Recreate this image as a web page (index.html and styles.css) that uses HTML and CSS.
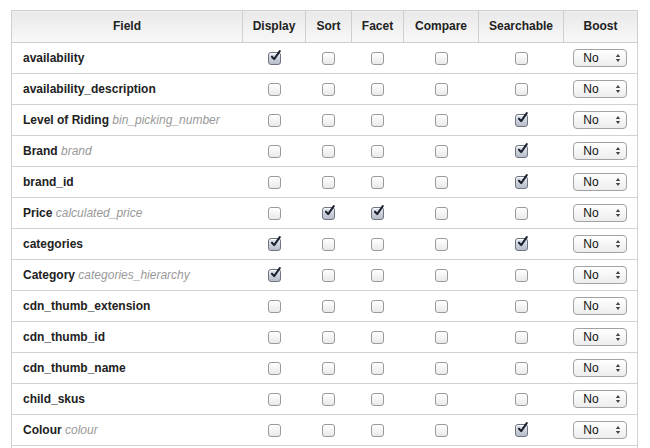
FILE: index.html
```html
<!DOCTYPE html>
<html>
<head>
<meta charset="utf-8">
<link rel="stylesheet" href="styles.css">
</head>
<body>
<svg class="defs" width="0" height="0">
  <symbol id="tick" viewBox="0 0 14 14">
    <path d="M3.2 7.2 L5.6 9.8 L11.6 1.2" fill="none" stroke="#1c2230" stroke-width="2.2" stroke-linecap="round" stroke-linejoin="round"/>
  </symbol>
  <symbol id="updown" viewBox="0 0 6 10">
    <path d="M3 1 L5.2 4 L0.8 4 Z M3 9 L5.2 6 L0.8 6 Z" fill="#444"/>
  </symbol>
</svg>
<div class="wrap">
<table class="fields">
  <colgroup>
    <col class="c-field"><col class="c-display"><col class="c-sort"><col class="c-facet"><col class="c-compare"><col class="c-search"><col class="c-boost">
  </colgroup>
  <thead>
    <tr><th>Field</th><th>Display</th><th>Sort</th><th>Facet</th><th>Compare</th><th>Searchable</th><th>Boost</th></tr>
  </thead>
  <tbody>
    <tr><td class="name">availability</td><td><span class="cb on"><svg><use href="#tick"/></svg></span></td><td><span class="cb"></span></td><td><span class="cb"></span></td><td><span class="cb"></span></td><td><span class="cb"></span></td><td><span class="sel">No<svg><use href="#updown"/></svg></span></td></tr>
    <tr><td class="name">availability_description</td><td><span class="cb"></span></td><td><span class="cb"></span></td><td><span class="cb"></span></td><td><span class="cb"></span></td><td><span class="cb"></span></td><td><span class="sel">No<svg><use href="#updown"/></svg></span></td></tr>
    <tr><td class="name">Level of Riding <em>bin_picking_number</em></td><td><span class="cb"></span></td><td><span class="cb"></span></td><td><span class="cb"></span></td><td><span class="cb"></span></td><td><span class="cb on"><svg><use href="#tick"/></svg></span></td><td><span class="sel">No<svg><use href="#updown"/></svg></span></td></tr>
    <tr><td class="name">Brand <em>brand</em></td><td><span class="cb"></span></td><td><span class="cb"></span></td><td><span class="cb"></span></td><td><span class="cb"></span></td><td><span class="cb on"><svg><use href="#tick"/></svg></span></td><td><span class="sel">No<svg><use href="#updown"/></svg></span></td></tr>
    <tr><td class="name">brand_id</td><td><span class="cb"></span></td><td><span class="cb"></span></td><td><span class="cb"></span></td><td><span class="cb"></span></td><td><span class="cb on"><svg><use href="#tick"/></svg></span></td><td><span class="sel">No<svg><use href="#updown"/></svg></span></td></tr>
    <tr><td class="name">Price <em>calculated_price</em></td><td><span class="cb"></span></td><td><span class="cb on"><svg><use href="#tick"/></svg></span></td><td><span class="cb on"><svg><use href="#tick"/></svg></span></td><td><span class="cb"></span></td><td><span class="cb"></span></td><td><span class="sel">No<svg><use href="#updown"/></svg></span></td></tr>
    <tr><td class="name">categories</td><td><span class="cb on"><svg><use href="#tick"/></svg></span></td><td><span class="cb"></span></td><td><span class="cb"></span></td><td><span class="cb"></span></td><td><span class="cb on"><svg><use href="#tick"/></svg></span></td><td><span class="sel">No<svg><use href="#updown"/></svg></span></td></tr>
    <tr><td class="name">Category <em>categories_hierarchy</em></td><td><span class="cb on"><svg><use href="#tick"/></svg></span></td><td><span class="cb"></span></td><td><span class="cb"></span></td><td><span class="cb"></span></td><td><span class="cb"></span></td><td><span class="sel">No<svg><use href="#updown"/></svg></span></td></tr>
    <tr><td class="name">cdn_thumb_extension</td><td><span class="cb"></span></td><td><span class="cb"></span></td><td><span class="cb"></span></td><td><span class="cb"></span></td><td><span class="cb"></span></td><td><span class="sel">No<svg><use href="#updown"/></svg></span></td></tr>
    <tr><td class="name">cdn_thumb_id</td><td><span class="cb"></span></td><td><span class="cb"></span></td><td><span class="cb"></span></td><td><span class="cb"></span></td><td><span class="cb"></span></td><td><span class="sel">No<svg><use href="#updown"/></svg></span></td></tr>
    <tr><td class="name">cdn_thumb_name</td><td><span class="cb"></span></td><td><span class="cb"></span></td><td><span class="cb"></span></td><td><span class="cb"></span></td><td><span class="cb"></span></td><td><span class="sel">No<svg><use href="#updown"/></svg></span></td></tr>
    <tr><td class="name">child_skus</td><td><span class="cb"></span></td><td><span class="cb"></span></td><td><span class="cb"></span></td><td><span class="cb"></span></td><td><span class="cb"></span></td><td><span class="sel">No<svg><use href="#updown"/></svg></span></td></tr>
    <tr><td class="name">Colour <em>colour</em></td><td><span class="cb"></span></td><td><span class="cb"></span></td><td><span class="cb"></span></td><td><span class="cb"></span></td><td><span class="cb on"><svg><use href="#tick"/></svg></span></td><td><span class="sel">No<svg><use href="#updown"/></svg></span></td></tr>
    <tr class="tail"><td class="name"></td><td></td><td></td><td></td><td></td><td></td><td></td></tr>
  </tbody>
</table>
</div>
</body>
</html>
```
FILE: styles.css
```css
html, body {
  margin: 0;
  padding: 0;
  background: #fff;
  overflow: hidden;
}
body {
  font-family: "Liberation Sans", Arial, Helvetica, sans-serif;
  font-size: 12px;
  color: #222;
}
.defs {
  position: absolute;
  width: 0;
  height: 0;
}
.wrap {
  padding: 10px 0 0 11px;
}
.fields {
  border-collapse: collapse;
  table-layout: fixed;
  width: 626px;
}
.c-field { width: 231px; }
.c-display { width: 63px; }
.c-sort { width: 46px; }
.c-facet { width: 52px; }
.c-compare { width: 75px; }
.c-search { width: 85px; }
.c-boost { width: 74px; }

.fields th {
  height: 29px;
  padding: 0 0 2px;
  border: 1px solid #cfcfcf;
  background: linear-gradient(#e9e9e9, #f8f8f8);
  font-weight: bold;
  font-size: 12px;
  color: #222;
  text-align: center;
  vertical-align: middle;
}
.fields td {
  height: 30px;
  padding: 0;
  border-bottom: 1px solid #d2d2d2;
  text-align: center;
  vertical-align: middle;
}
.fields td:first-child { border-left: 1px solid #d2d2d2; }
.fields td:last-child { border-right: 1px solid #d2d2d2; }
.fields td.name {
  text-align: left;
  padding-left: 11px;
  font-weight: bold;
  white-space: nowrap;
}
.fields td.name em {
  font-weight: normal;
  font-style: italic;
  color: #999;
}

.cb {
  display: inline-block;
  position: relative;
  width: 11px;
  height: 11px;
  border: 1px solid #9a9a9a;
  border-radius: 3px;
  background: linear-gradient(#ffffff, #e9e9e9);
  vertical-align: middle;
  box-shadow: inset 0 1px 0 #fff;
}
.cb.on {
  border-color: #6f7480;
  background: linear-gradient(#e4e8ef, #b6bdc9);
}
.cb svg {
  position: absolute;
  left: 0;
  top: -3px;
  width: 13px;
  height: 13px;
}

.sel {
  display: inline-flex;
  align-items: center;
  justify-content: space-between;
  box-sizing: border-box;
  width: 54px;
  height: 18px;
  padding: 0 5px 0 9px;
  border: 1px solid #a2a2a2;
  border-radius: 4px;
  background: linear-gradient(#ffffff, #ededed);
  font-size: 12px;
  color: #111;
  vertical-align: middle;
  text-align: left;
}
.sel svg {
  width: 6px;
  height: 10px;
}
```
